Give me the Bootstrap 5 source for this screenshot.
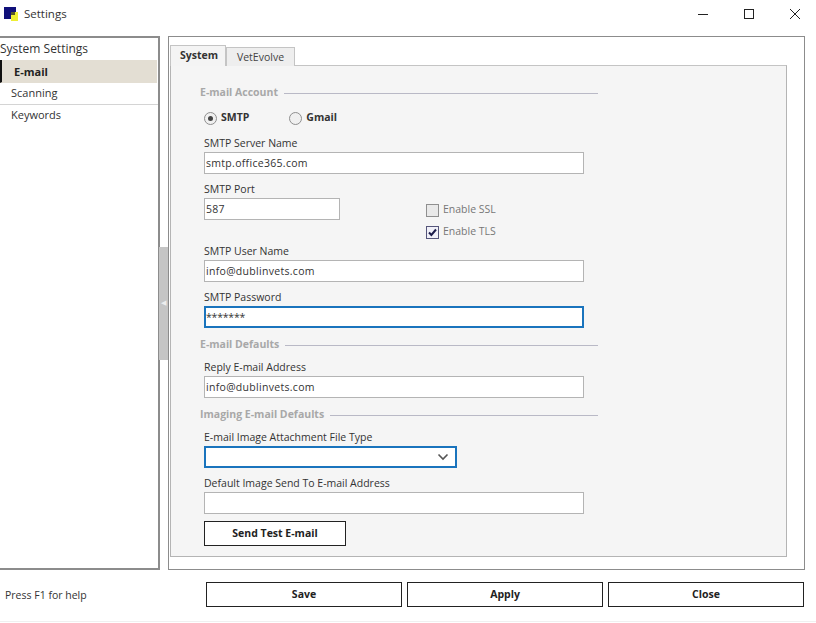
<!DOCTYPE html>
<html lang="en">
<head>
    <meta charset="UTF-8">
    <title>Settings</title>
    <meta name="viewport" content="width=device-width, initial-scale=1.0">
    <link href="https://cdn.jsdelivr.net/npm/bootstrap@5.3.0/dist/css/bootstrap.min.css" rel="stylesheet">
    <style>
        html, body { height: 623px; overflow: hidden; }
        body { background: #fff; color: #222; font-family: "Open Sans", "Noto Sans", sans-serif; font-size: 10.5px; }

        .title-row { height: 36px; padding: 0 0 8px 4px; }
        .title-text { font-size: 11.5px; margin-left: 6px; color: #333; }
        .win-btns { width: 119px; padding-right: 15px; }

        .work-row { height: 534px; }
        .side-box { width: 160px; border: 2px solid #8c8c8c; border-left: 0; }
        .side-head { font-size: 12px; height: 22px; line-height: 21px; color: #333; }
        .side-box .list-group-item { background: transparent; border-width: 0 0 1px 0; border-color: #d4d4d4; border-radius: 0; color: #333; font-size: 11px; height: 22px; line-height: 19px; padding: 0 0 0 11px; }
        .side-box .list-group-item.active { background: #e3ded3; border-color: #e3ded3; border-left: 2px solid #111; color: #222; font-weight: 700; height: 23px; line-height: 23px; padding-left: 12px; margin-right: 1px; margin-top: 0; }
        .split-col { width: 8px; }
        .split-grip { height: 113px; width: 9px; margin-left: -1px; background: #c5c5c5; color: #eee; font-size: 7px; }

        .main-box { width: 637px; border: 1px solid #8c8c8c; padding: 8px 17px 12px 1px; }
        .main-box .nav-tabs { border-bottom: 0; height: 20px; align-items: flex-end; }
        .main-box .nav-link { border: 1px solid #c4c4c4; border-bottom: 0; border-radius: 0; margin: 0; padding: 0; height: 19px; width: 69px; line-height: 19px; text-align: center; font-size: 10.5px; color: #444; background: #eee; }
        .main-box .nav-link.active { width: 56px; height: 21px; line-height: 19px; padding-left: 2px; font-weight: 700; color: #333; background: #f4f4f4; border-color: #c4c4c4; }
        .tab-pane-box { background: #f5f5f5; border: 1px solid #b4b4b4; border-top-color: #c4c4c4; height: 492px; padding: 18px 0 0 29px; }

        .form-col { width: 398px; }
        .group-head { height: 18px; color: #a8a8a8; font-weight: 700; font-size: 10.5px; gap: 6px; }
        .group-head::after { content: ""; flex: 1; border-top: 1px solid #b9b9c6; }
        .group-next { margin-top: 8px; margin-bottom: 4px; }
        .indent { padding-left: 4px; }

        .radio-row { height: 32px; gap: 40px; padding-left: 4px; font-weight: 700; color: #333; }
        .radio-dot { width: 13px; height: 13px; border: 1px solid #8f8f8f; border-radius: 50%; background: #f0f0f0; margin-right: 4px; }
        .radio-dot.on::after { content: ""; width: 5px; height: 5px; border-radius: 50%; background: #444; }

        .fld-label { display: block; height: 18px; line-height: 18px; margin: 0; color: #333; font-size: 10.5px; }
        .fld { display: block; height: 22px; width: 380px; padding: 0 1px; border: 1px solid #b4b4b4; border-radius: 0; font-size: 10.5px; font-family: inherit; color: #333; letter-spacing: .3px; background: #fff; margin-bottom: 6px; }
        .fld:focus { box-shadow: none; }
        .fld-short { width: 136px; margin-bottom: 0; }
        .fld-focus { border: 2px solid #1a74bd; padding: 0; letter-spacing: -.2px; }
        .port-row { height: 62px; }
        .check-col { margin-left: 86px; padding-top: 23px; gap: 8px; color: #777; }
        .check-row { height: 14px; gap: 4px; }
        .check-box { width: 13px; height: 13px; border: 1px solid #8f8f8f; background: #e9e9e9; }
        .check-box.on { background: #f0f0f8; border-color: #55557a; }

        .combo-fld { width: 253px; height: 22px; border: 2px solid #1a74bd; background: #fff; padding-right: 6px; margin-bottom: 6px; }
        .act-btn { font-family: inherit; font-size: 10.5px; font-weight: 700; color: #222; background: #fff; border: 1px solid #222; border-radius: 0; padding: 0; height: 25px; }
        .act-btn:hover { background: #fff; color: #222; border-color: #222; }
        .test-btn { width: 142px; margin-top: 1px; }

        .foot-row { height: 52px; padding: 12px 12px 0 5px; border-bottom: 1px solid #f0f0f0; }
        .foot-help { width: 201px; color: #333; font-size: 10.5px; padding-top: 6px; }
        .foot-btns { gap: 5px; height: 25px; }
        .foot-btns .act-btn { width: 196px; }
    </style>
</head>
<body>

<!-- Title bar -->
<div class="title-row d-flex align-items-center justify-content-between">
    <div class="d-flex align-items-center">
        <svg width="14" height="15" viewBox="0 0 14 15">
            <rect x="0" y="0" width="12" height="12" fill="#10107a"/>
            <rect x="7" y="5" width="7" height="9" fill="#eeee33"/>
            <rect x="7" y="5" width="4" height="3" fill="#55552a"/>
        </svg>
        <span class="title-text">Settings</span>
    </div>
    <div class="win-btns d-flex justify-content-between align-items-center">
        <svg width="12" height="12" viewBox="0 0 12 12"><path d="M1 6.5h10" stroke="#222" fill="none"/></svg>
        <svg width="12" height="12" viewBox="0 0 12 12"><rect x="1.5" y="1.5" width="9" height="9" stroke="#222" fill="none"/></svg>
        <svg width="12" height="12" viewBox="0 0 12 12"><path d="M1 1l10 10M11 1L1 11" stroke="#222" fill="none"/></svg>
    </div>
</div>

<div class="work-row d-flex">
    <!-- Sidebar -->
    <div class="side-box">
        <div class="side-head">System Settings</div>
        <div class="list-group list-group-flush">
            <a class="list-group-item active">E-mail</a>
            <a class="list-group-item">Scanning</a>
            <a class="list-group-item">Keywords</a>
        </div>
    </div>

    <div class="split-col d-flex align-items-center">
        <div class="split-grip d-flex align-items-center justify-content-center">&#9664;</div>
    </div>

    <!-- Tabs and form -->
    <div class="main-box">
        <ul class="nav nav-tabs">
            <li class="nav-item"><a class="nav-link active">System</a></li>
            <li class="nav-item"><a class="nav-link">VetEvolve</a></li>
        </ul>
        <div class="tab-pane-box">
            <div class="form-col">
                <div class="group-head d-flex align-items-center">E-mail Account</div>
                <div class="radio-row d-flex align-items-center">
                    <span class="d-flex align-items-center"><span class="radio-dot on d-flex align-items-center justify-content-center"></span>SMTP</span>
                    <span class="d-flex align-items-center"><span class="radio-dot"></span>Gmail</span>
                </div>

                <div class="indent">
                    <label class="fld-label">SMTP Server Name</label>
                    <input class="form-control fld" value="smtp.office365.com">
                    <div class="port-row d-flex">
                        <div>
                            <label class="fld-label">SMTP Port</label>
                            <input class="form-control fld fld-short" value="587">
                        </div>
                        <div class="check-col d-flex flex-column">
                            <div class="check-row d-flex align-items-center"><span class="check-box"></span>Enable SSL</div>
                            <div class="check-row d-flex align-items-center">
                                <span class="check-box on d-flex">
                                    <svg width="11" height="11" viewBox="0 0 11 11"><path d="M2 5.5l2.4 2.5L9 2.5" stroke="#1c1c4a" stroke-width="2" fill="none"/></svg>
                                </span>Enable TLS
                            </div>
                        </div>
                    </div>
                    <label class="fld-label">SMTP User Name</label>
                    <input class="form-control fld" value="info@dublinvets.com">
                    <label class="fld-label">SMTP Password</label>
                    <input class="form-control fld fld-focus" value="*******">
                </div>

                <div class="group-head group-next d-flex align-items-center">E-mail Defaults</div>
                <div class="indent">
                    <label class="fld-label">Reply E-mail Address</label>
                    <input class="form-control fld" value="info@dublinvets.com">
                </div>

                <div class="group-head group-next d-flex align-items-center">Imaging E-mail Defaults</div>
                <div class="indent">
                    <label class="fld-label">E-mail Image Attachment File Type</label>
                    <div class="combo-fld d-flex align-items-center justify-content-end">
                        <svg width="12" height="8" viewBox="0 0 12 8"><path d="M1.5 1.5L6 6l4.500-4.500" stroke="#555" stroke-width="1.600" fill="none"/></svg>
                    </div>
                    <label class="fld-label">Default Image Send To E-mail Address</label>
                    <input class="form-control fld" value="">
                    <button class="btn act-btn test-btn">Send Test E-mail</button>
                </div>
            </div>
        </div>
    </div>
</div>

<!-- Footer -->
<div class="foot-row d-flex">
    <div class="foot-help">Press F1 for help</div>
    <div class="foot-btns d-flex">
        <button class="btn act-btn">Save</button>
        <button class="btn act-btn">Apply</button>
        <button class="btn act-btn">Close</button>
    </div>
</div>

<script src="https://cdn.jsdelivr.net/npm/bootstrap@5.3.0/dist/js/bootstrap.bundle.min.js"></script>
</body>
</html>
